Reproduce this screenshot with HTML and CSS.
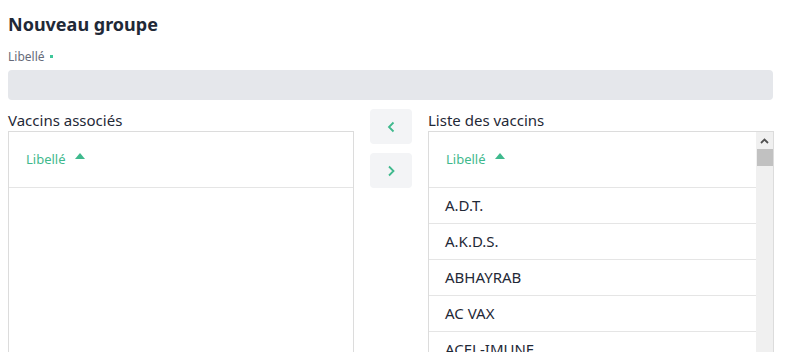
FILE: index.html
```html
<!DOCTYPE html>
<html lang="fr">
<head>
  <meta charset="UTF-8" />
  <title>Nouveau groupe</title>
  <link rel="stylesheet" href="styles.css">
</head>
<body>
  <div id="page">
    <h1 class="title">Nouveau groupe</h1>

    <label class="field-label" for="libelle">Libellé <span class="required"></span></label>
    <input id="libelle" class="field-input" type="text" />

    <div class="picker">
      <div class="col">
        <div class="col-title">Vaccins associés</div>
        <div class="box">
          <div class="box-main">
            <div class="head">Libellé <span class="sort"></span></div>
          </div>
        </div>
      </div>

      <div class="moves">
        <button class="move">
          <svg width="10" height="12" viewBox="0 0 10 12"><path d="M7.5 1.5 L3 6 L7.5 10.5" fill="none" stroke="#3fb98d" stroke-width="1.8"/></svg>
        </button>
        <button class="move">
          <svg width="10" height="12" viewBox="0 0 10 12"><path d="M3 1.5 L7.5 6 L3 10.5" fill="none" stroke="#3fb98d" stroke-width="1.8"/></svg>
        </button>
      </div>

      <div class="col">
        <div class="col-title">Liste des vaccins</div>
        <div class="box">
          <div class="box-main">
            <div class="head">Libellé <span class="sort"></span></div>
            <div class="row">A.D.T.</div>
            <div class="row">A.K.D.S.</div>
            <div class="row">ABHAYRAB</div>
            <div class="row">AC VAX</div>
            <div class="row">ACEL-IMUNE</div>
          </div>
          <div class="scrollbar">
            <div class="scroll-arrow">
              <svg width="9" height="6" viewBox="0 0 9 6"><path d="M1 5 L4.5 1.5 L8 5" fill="none" stroke="#505050" stroke-width="1.8"/></svg>
            </div>
            <div class="scroll-thumb"></div>
          </div>
        </div>
      </div>
    </div>
  </div>
</body>
</html>
```

FILE: styles.css
```css
body {
  margin: 0;
  font-family: "Noto Sans", "Open Sans", sans-serif;
  color: #1f2937;
  background: #fff;
  overflow: hidden;
}
#page {
  width: 765px;
  padding: 10px 0 0 8px;
}
.title {
  margin: 0;
  font-size: 18px;
  font-weight: 700;
  line-height: 28px;
  color: #1f2937;
}
.field-label {
  display: block;
  margin-top: 11px;
  font-size: 12px;
  line-height: 16px;
  color: #666b7a;
}
.required {
  display: inline-block;
  width: 3px;
  height: 3px;
  margin-left: 2px;
  vertical-align: 3px;
  background: #3fc79a;
}
.field-input {
  display: block;
  box-sizing: border-box;
  width: 765px;
  height: 30px;
  margin-top: 5px;
  border: none;
  border-radius: 4px;
  background: #e5e7eb;
}
.picker {
  display: grid;
  grid-template-columns: 346px 42px 346px;
  column-gap: 16px;
  margin-top: 9px;
}
.col-title {
  font-size: 15px;
  line-height: 22px;
  color: #1f2937;
}
.box {
  display: flex;
  height: 260px;
  border: 1px solid #dcdcdc;
}
.box-main {
  flex-grow: 1;
}
.head {
  height: 55px;
  line-height: 55px;
  padding-left: 17px;
  border-bottom: 1px solid #e5e5e5;
  font-size: 13px;
  color: #3fb98d;
}
.sort {
  display: inline-block;
  width: 0;
  height: 0;
  margin-left: 6px;
  vertical-align: 5px;
  border-left: 5px solid transparent;
  border-right: 5px solid transparent;
  border-bottom: 6px solid #3fb98d;
}
.row {
  height: 35px;
  line-height: 35px;
  padding-left: 16px;
  border-bottom: 1px solid #e5e5e5;
  font-size: 15px;
  color: #1f2937;
}
.moves {
  display: flex;
  flex-direction: column;
  gap: 9px;
}
.move {
  display: flex;
  align-items: center;
  justify-content: center;
  width: 42px;
  height: 35px;
  padding: 0;
  border: none;
  border-radius: 4px;
  background: #f3f4f6;
}
.scrollbar {
  width: 17px;
  background: #f0f0f0;
}
.scroll-arrow {
  display: flex;
  align-items: center;
  justify-content: center;
  height: 17px;
}
.scroll-thumb {
  height: 17px;
  margin-left: 1px;
  width: 16px;
  background: #c1c1c1;
}
```
